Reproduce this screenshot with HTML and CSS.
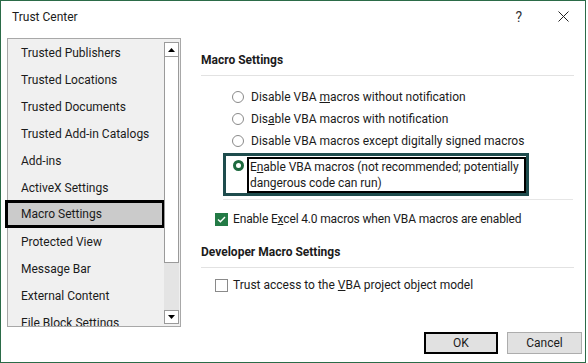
FILE: index.html
```html
<!DOCTYPE html>
<html>
<head>
<meta charset="utf-8">
<link rel="stylesheet" href="styles.css">
</head>
<body>
<div class="window">
  <div class="titlebar">
    <span class="title">Trust Center</span>
    <span class="help">?</span>
    <span class="close"><svg width="11" height="11" viewBox="0 0 11 11"><path d="M0.5 0.5L10.5 10.5M10.5 0.5L0.5 10.5" stroke="#222" stroke-width="1"/></svg></span>
  </div>
  <div class="main">
    <div class="listbox">
      <ul class="items">
        <li class="item">Trusted Publishers</li>
        <li class="item">Trusted Locations</li>
        <li class="item">Trusted Documents</li>
        <li class="item">Trusted Add-in Catalogs</li>
        <li class="item">Add-ins</li>
        <li class="item">ActiveX Settings</li>
        <li class="item selected">Macro Settings</li>
        <li class="item">Protected View</li>
        <li class="item">Message Bar</li>
        <li class="item">External Content</li>
        <li class="item">File Block Settings</li>
      </ul>
      <div class="scrollbar">
        <div class="sb-btn"><svg width="7" height="4" viewBox="0 0 7 4"><path d="M0 4L3.5 0L7 4Z" fill="#000"/></svg></div>
        <div class="sb-thumb"></div>
        <div class="sb-track"></div>
        <div class="sb-btn"><svg width="7" height="4" viewBox="0 0 7 4"><path d="M0 0L3.5 4L7 0Z" fill="#000"/></svg></div>
      </div>
    </div>
    <div class="panel">
      <div class="heading">Macro Settings</div>
      <div class="options">
        <div class="opt"><span class="radio"></span><span>Disable VBA <u>m</u>acros without notification</span></div>
        <div class="opt"><span class="radio"></span><span>Dis<u>a</u>ble VBA macros with notification</span></div>
        <div class="opt"><span class="radio"></span><span>Disable VBA macros except digitally signed macros</span></div>
        <div class="focus">
          <span class="radio on"></span>
          <span class="focus-text">E<u>n</u>able VBA macros (not recommended; potentially<br>dangerous code can run)</span>
        </div>
      </div>
      <div class="rule"></div>
      <div class="check-row first"><span class="check on"><svg width="9" height="7" viewBox="0 0 9 7"><path d="M1 3.5L3.4 5.8L8 1" fill="none" stroke="#fff" stroke-width="1.4"/></svg></span><span>Enable E<u>x</u>cel 4.0 macros when VBA macros are enabled</span></div>
      <div class="heading dev">Developer Macro Settings</div>
      <div class="check-row second"><span class="check"></span><span>Trust access to the <u>V</u>BA project object model</span></div>
    </div>
  </div>
  <div class="footer">
    <button class="btn default">OK</button>
    <button class="btn">Cancel</button>
  </div>
</div>
</body>
</html>
```

FILE: styles.css
```css
* { box-sizing: border-box; }
html, body { margin: 0; padding: 0; background: #fff; }
body {
  font-family: Roboto, "Liberation Sans", sans-serif;
  font-size: 12px;
  color: #1b1b1b;
}
.window {
  width: 586px;
  height: 363px;
  border: 1px solid #2b6b48;
  background: #fff;
  display: flex;
  flex-direction: column;
}
.titlebar {
  height: 37px;
  display: flex;
  align-items: flex-start;
  flex-shrink: 0;
}
.title { padding-left: 11px; line-height: 16px; margin-top: 8px; }
.help { margin-left: auto; font-size: 14px; line-height: 16px; margin-top: 8px; color: #333; }
.close { margin-left: 36px; margin-right: 16px; margin-top: 10px; display: flex; }

.main { display: flex; height: 289px; flex-shrink: 0; }
.listbox {
  margin-left: 6px;
  width: 174px;
  height: 289px;
  border: 1px solid #a8a8a8;
  background: #f0f0f0;
  display: flex;
}
.items {
  list-style: none;
  margin: 0;
  padding: 1px 0 0 0;
  width: 156px;
  overflow-x: visible;
  overflow-y: clip;
}
.item {
  height: 27px;
  line-height: 27px;
  padding-left: 13px;
  white-space: nowrap;
}
.item.selected {
  height: 28px;
  margin-top: -2px;
  margin-bottom: 1px;
  margin-left: -3px;
  margin-right: -1px;
  border: 3px solid #000;
  background: #cbcbcb;
  padding-left: 13px;
  line-height: 23px;
}
.scrollbar {
  width: 16px;
  padding: 3px 1px 2px 0;
  display: flex;
  flex-direction: column;
}
.sb-btn {
  height: 15px;
  border: 1px solid #9a9a9a;
  background: #fff;
  display: flex;
  align-items: center;
  justify-content: center;
  flex-shrink: 0;
}
.sb-btn:last-child { height: 14px; }
.sb-thumb { height: 206px; background: #fff; border: 1px solid #9a9a9a; border-top: none; flex-shrink: 0; }
.sb-track { flex: 1; background: #e4e4e4; }

.panel { margin-left: 20px; flex: 1; padding-top: 14px; }
.heading {
  font-weight: bold;
  line-height: 16px;
  padding-bottom: 7px;
  border-bottom: 1px solid #e2e2e2;
  margin-right: 11px;
}
.options { margin-left: 31px; margin-top: 10px; }
.opt { display: flex; align-items: center; height: 22px; line-height: 16px; white-space: nowrap; }
.radio {
  width: 12px;
  height: 12px;
  border: 1px solid #8a8a8a;
  border-radius: 50%;
  margin-left: 0;
  margin-right: 7px;
  flex-shrink: 0;
  background: #fff;
}
.radio.on { border: 3px solid #1e6a3f; width: 11px; height: 11px; margin-right: 3px; margin-top: 3px; }
.focus {
  margin-top: 1px;
  margin-left: -9px;
  width: 306px;
  height: 43px;
  border: 3px solid #1e4c4d;
  padding: 1px 0 1px 7px;
  display: flex;
  align-items: flex-start;
}
.focus-text {
  border: 2px solid #000;
  line-height: 16px;
  padding-left: 1px;
  flex: 1;
  white-space: nowrap;
  letter-spacing: -0.05px;
}
.rule { margin: 3px 12px 0 22px; border-top: 1px solid #e6e6e6; }
.check-row { display: flex; align-items: center; line-height: 16px; margin-left: 14px; white-space: nowrap; }
.check-row.first { margin-top: 11px; letter-spacing: -0.15px; }
.check-row.second { margin-top: 9px; }
.check {
  width: 13px;
  height: 13px;
  border: 1px solid #8a8a8a;
  background: #fff;
  margin-right: 5px;
  display: flex;
  align-items: center;
  justify-content: center;
  flex-shrink: 0;
}
.check.on { background: #237a45; border-color: #237a45; }
.heading.dev { margin-top: 17px; }

.footer { display: flex; justify-content: flex-end; gap: 9px; padding-right: 3px; margin-top: 5px; }
.btn {
  width: 75px;
  height: 22px;
  border: 1px solid #adadad;
  background: #e1e1e1;
  font-family: Roboto, "Liberation Sans", sans-serif;
  font-size: 12px;
  color: #1b1b1b;
  padding: 0;
}
.btn.default { border: 2px solid #000; width: 74px; }
```
